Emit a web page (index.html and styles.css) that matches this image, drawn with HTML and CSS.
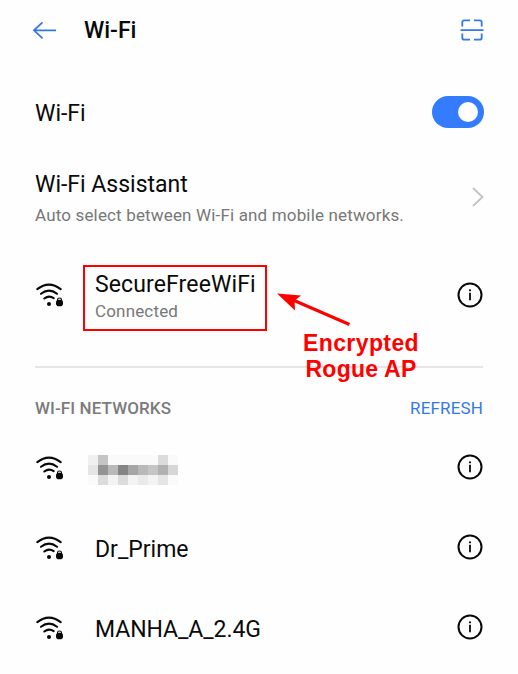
FILE: index.html
```
<!DOCTYPE html>
<html lang="en">
<head>
<meta charset="utf-8">
<title>Wi-Fi</title>
<link rel="stylesheet" href="styles.css">
</head>
<body>
<svg class="defs" width="0" height="0" aria-hidden="true">
  <symbol id="wifi" viewBox="0 0 30 26">
    <g fill="none" stroke="#080808" stroke-width="2.100" stroke-linecap="round">
      <path d="M2.300 6.200Q14-2.800 25.700 6.200"/>
      <path d="M6 10.800Q14 4.500 22 10.800"/>
      <path d="M9.300 15.500Q14 11.800 18.700 15.200"/>
    </g>
    <circle cx="14" cy="21" r="2" fill="#080808"/>
    <path d="M22.500 18v-1.300a2 1.700 0 0 1 4 0v1.300" fill="none" stroke="#080808" stroke-width="1.100"/>
    <rect x="21" y="16.800" width="7" height="6.400" rx="2.800" fill="#080808"/>
  </symbol>
  <symbol id="info" viewBox="0 0 26 26">
    <circle cx="13" cy="13" r="11.500" fill="none" stroke="#080808" stroke-width="2"/>
    <path d="M13 10.800V18.200" stroke="#080808" stroke-width="1.800"/>
    <circle cx="13" cy="8.300" r="1.100" fill="#080808"/>
  </symbol>
</svg>
<main class="screen">
  <header class="bar">
    <svg class="back" width="26" height="20" viewBox="0 0 26 20"><path d="M24 10.300H2M10.500 2.300L2 10.300l8.500 8" fill="none" stroke="#3578e5" stroke-width="1.800"/></svg>
    <h1 class="title">Wi-Fi</h1>
    <svg class="scan" width="24" height="24" viewBox="0 0 24 24"><path d="M2.300 8.500V4.300Q2.300 2.300 4.300 2.300H10M14 2.300h5.700q2 0 2 2v4.200M2.300 15.500v4.200q0 2 2 2H10M14 21.700h5.700q2 0 2-2v-4.200M.5 12.200h23" fill="none" stroke="#3578e5" stroke-width="1.800"/></svg>
  </header>

  <section class="row toggle-row">
    <span class="name wifi-name">Wi-Fi</span>
    <span class="switch"><span class="knob"></span></span>
  </section>

  <section class="row assistant">
    <div class="stack">
      <span class="name">Wi-Fi Assistant</span>
      <span class="sub">Auto select between Wi-Fi and mobile networks.</span>
    </div>
    <svg class="chevron" width="14" height="22" viewBox="0 0 14 22"><path d="M2 2l9.500 9L2 20" fill="none" stroke="#c3c3c3" stroke-width="1.800"/></svg>
  </section>

  <section class="row current">
    <svg class="wifi"><use href="#wifi"/></svg>
    <div class="highlight">
      <span class="name ssid">SecureFreeWiFi</span>
      <span class="sub">Connected</span>
    </div>
    <svg class="info"><use href="#info"/></svg>
    <div class="note">
      <svg width="76" height="36" viewBox="0 0 76 36"><path d="M16 8L72.500 32.500" stroke="#f00" stroke-width="3"/><path d="M0 1.500l24 2-6.500 5.200.5 9.800z" fill="#f00"/></svg>
      <p class="note-text"><span class="note-a">Encrypted</span><br><span class="note-b">Rogue AP</span></p>
    </div>
  </section>

  <section class="row heading">
    <h2 class="label">WI-FI NETWORKS</h2>
    <span class="refresh">REFRESH</span>
  </section>

  <section class="row network">
    <svg class="wifi"><use href="#wifi"/></svg>
    <div class="mosaic">
      <i class="g1"></i><i class="g4"></i><i class="g0"></i><i class="g0"></i><i class="g0"></i><i class="g0"></i><i class="g0"></i><i class="g3"></i><i class="g0"></i>
      <i class="g2"></i><i class="g7"></i><i class="g5"></i><i class="g8"></i><i class="g6"></i><i class="g5"></i><i class="g4"></i><i class="g5b"></i><i class="g3b"></i>
      <i class="g0"></i><i class="g3"></i><i class="g1b"></i><i class="g3"></i><i class="g1b"></i><i class="g2b"></i><i class="g1b"></i><i class="g2"></i><i class="g0"></i>
    </div>
    <svg class="info"><use href="#info"/></svg>
  </section>
  <section class="row network">
    <svg class="wifi"><use href="#wifi"/></svg>
    <span class="name net">Dr_Prime</span>
    <svg class="info"><use href="#info"/></svg>
  </section>
  <section class="row network">
    <svg class="wifi"><use href="#wifi"/></svg>
    <span class="name net manha">MANHA_A_2.4G</span>
    <svg class="info"><use href="#info"/></svg>
  </section>
</main>
</body>
</html>
```
FILE: styles.css
```
* { box-sizing: border-box; }
body { margin: 0; background: #fefefe; font-family: Roboto, "Liberation Sans", sans-serif; color: #0a0a0a; }
.defs { position: absolute; }
svg { display: block; flex: none; }
.screen { width: 518px; height: 674px; padding: 0 35px; display: flex; flex-direction: column; overflow: hidden; }
.bar { height: 60px; flex: none; display: flex; align-items: center; }
.back { margin-left: -3px; }
.title { margin: 2px 0 0 26px; font-size: 23px; line-height: 26px; font-weight: 500; }
.scan { margin: 0 -0.5px 0 auto; }
.row { display: flex; align-items: center; justify-content: space-between; flex: none; }
.name { font-size: 23px; line-height: 26px; white-space: nowrap; }
.wifi-name { margin-top: 2px; }
.sub { font-size: 17px; line-height: 20px; letter-spacing: 0.16px; color: #777; white-space: nowrap; }
.toggle-row { height: 106px; }
.switch { width: 52px; height: 32px; margin: -2px -0.5px 0 0; border-radius: 16px; background: #337bff; padding: 6px; display: flex; justify-content: flex-end; }
.knob { width: 20px; height: 20px; border-radius: 50%; background: #fff; }
.assistant { height: 66px; padding-top: 2px; }
.stack { display: flex; flex-direction: column; gap: 7px; margin-top: -4px; }
.chevron { margin: -6px -2px 0 0; }
.current { position: relative; height: 136px; border-bottom: 2px solid #e5e5e5; align-items: flex-start; }
.current .wifi { margin-top: 51px; }
.current .info { margin-top: 50px; }
.wifi { width: 30px; height: 26px; }
.info { width: 26px; height: 26px; }
.highlight { width: 184px; height: 66px; margin: 33px auto 0 18px; border: 2px solid #f00; padding: 5px 10px; display: flex; flex-direction: column; gap: 3px; }
.ssid { letter-spacing: 0.12px; }
.note { position: absolute; left: 242px; top: 60px; color: #f00; }
.note-text { margin: 2px 0 0 21px; width: 126px; text-align: center; font: bold 23px/26px "Liberation Sans", sans-serif; white-space: nowrap; }
.note-a { letter-spacing: 0.4px; }
.note-b { letter-spacing: 0.25px; }
.heading { height: 60px; padding-top: 19px; }
.label { margin: 0; font-size: 17px; line-height: 20px; font-weight: 500; color: #7b7b7b; letter-spacing: 0.1px; }
.refresh { font-size: 17px; line-height: 20px; color: #3578e5; letter-spacing: 0.15px; }
.network { height: 80px; }
.network .wifi { margin-top: 2px; }
.network .info { margin-top: -2px; }
.net { margin: 3px auto 0 30px; }
.manha { letter-spacing: -0.06px; }
.mosaic { display: grid; grid-template-columns: repeat(9, 10px); grid-auto-rows: 10px; margin: 4px auto 0 23px; }
.g0 { background: #fafafa; }
.g1 { background: #f0f0f0; }
.g1b { background: #f3f3f3; }
.g2 { background: #e5e5e5; }
.g2b { background: #eaeaea; }
.g3 { background: #dcdcdc; }
.g3b { background: #d6d6d6; }
.g4 { background: #c5c5c5; }
.g5 { background: #b9b9b9; }
.g5b { background: #b1b1b1; }
.g6 { background: #a6a6a6; }
.g7 { background: #949494; }
.g8 { background: #858585; }
```
